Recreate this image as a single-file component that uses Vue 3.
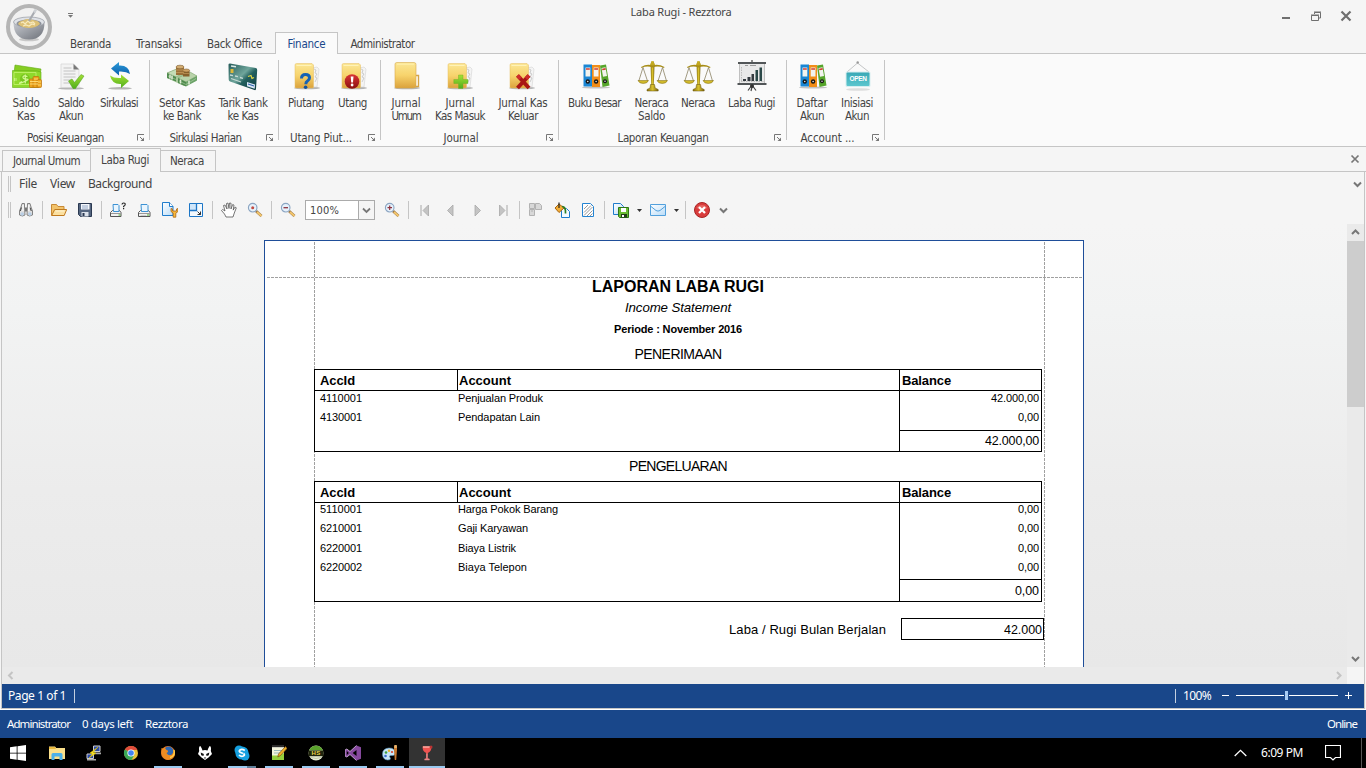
<script setup>
// Sets letter spacing so that a label takes up the given width in pixels.
const vFit = {
  mounted(el, { value }) {
    if (!value) return
    const n = el.textContent.length
    const natural = el.getBoundingClientRect().width
    el.style.letterSpacing = ((value - natural) / n).toFixed(3) + 'px'
  },
}

const ribbonTabs = [
  { t: 'Beranda', w: 67, f: 41 },
  { t: 'Transaksi', w: 70, f: 46 },
  { t: 'Back Office', w: 81, f: 55 },
  { t: 'Finance', w: 63, f: 38, on: true },
  { t: 'Administrator', w: 89, f: 64 },
]

const groups = [
  { name: 'Posisi Keuangan', f: 77, c: 65.5, w: 150, pad: 4, items: [
    { i: 'cash', w: 44, l: [['Saldo', 27], ['Kas', 18]] },
    { i: 'doc', w: 46, l: [['Saldo', 26], ['Akun', 24]] },
    { i: 'cycle', w: 50, l: [['Sirkulasi', 38]] } ] },
  { name: 'Sirkulasi Harian', f: 72, c: 55.5, w: 129, pad: 2, items: [
    { i: 'stack', w: 60, l: [['Setor Kas', 46], ['ke Bank', 38]] },
    { i: 'card', w: 62, l: [['Tarik Bank', 49], ['ke Kas', 31]] } ] },
  { name: 'Utang Piut...', f: 62, c: 42, w: 102, pad: 1, items: [
    { i: 'ask', w: 52, l: [['Piutang', 36]] },
    { i: 'warn', w: 41, l: [['Utang', 29]] } ] },
  { name: 'Journal', f: 35, c: 80, w: 178, pad: 2, items: [
    { i: 'folder', w: 46, l: [['Jurnal', 29], ['Umum', 29]] },
    { i: 'plus', w: 62, l: [['Jurnal', 29], ['Kas Masuk', 50]] },
    { i: 'cross', w: 64, l: [['Jurnal Kas', 49], ['Keluar', 30]] } ] },
  { name: 'Laporan Keuangan', f: 91, c: 104, w: 228, pad: 2, items: [
    { i: 'binders', w: 67, l: [['Buku Besar', 53]] },
    { i: 'scales', w: 47, l: [['Neraca', 34], ['Saldo', 27]] },
    { i: 'scales', w: 46, l: [['Neraca', 34]] },
    { i: 'chart', w: 61, l: [['Laba Rugi', 47]] } ] },
  { name: 'Account ...', f: 54, c: 40.5, w: 98, pad: 2, items: [
    { i: 'binders', w: 46, l: [['Daftar', 31], ['Akun', 24]] },
    { i: 'open', w: 44, l: [['Inisiasi', 32], ['Akun', 24]] } ] },
]

const tools = [
  ['binoc', 26], ['sep', 7], ['openf', 26], ['save', 26], ['sep', 7],
  ['printq', 26], ['print', 26], ['setup', 26], ['scale', 26], ['sep', 7],
  ['hand', 26], ['magdot', 26], ['sep', 7], ['zout', 26], ['combo', 78], ['mag', 26],
  ['sep', 7], ['first', 26], ['prev', 26], ['next', 26], ['last', 26], ['sep', 7],
  ['multi', 26], ['bucket', 26], ['hatch', 26], ['sep', 7], ['export', 26],
  ['arrow', 11], ['mail', 26], ['arrow', 11], ['sep', 7], ['stop', 26], ['more', 16],
]

const tables = [
  { title: 'PENERIMAAN', tf: 87, h: 'short',
    rows: [['4110001', 'Penjualan Produk', '42.000,00', 85, 48], ['4130001', 'Pendapatan Lain', '0,00', 82, 21]],
    total: '42.000,00', totf: 54 },
  { title: 'PENGELUARAN', tf: 98, h: 'tall',
    rows: [['5110001', 'Harga Pokok Barang', '0,00', 100, 21], ['6210001', 'Gaji Karyawan', '0,00', 70, 21],
      ['6220001', 'Biaya Listrik', '0,00', 58, 21], ['6220002', 'Biaya Telepon', '0,00', 69, 21]],
    total: '0,00', totf: 24 },
]

const tasks = [
  { i: 'win' }, { i: 'files' }, { i: 'putty' }, { i: 'chrome' }, { i: 'fox', run: true }, { i: 'foobar' },
  { i: 'skype', run: true, multi: true }, { i: 'note', run: true }, { i: 'hs', run: true }, { i: 'vs', run: true },
  { i: 'paint', run: true }, { i: 'wine', run: true, on: true },
]
</script>

<template>
  <div class="app">
    <svg class="defs" width="0" height="0">
      <defs>
        <linearGradient id="gFolder" x1="0" y1="0" x2="0" y2="1"><stop offset="0" stop-color="#fbe795" /><stop offset=".5" stop-color="#f7d36c" /><stop offset="1" stop-color="#dba23c" /></linearGradient>
        <linearGradient id="gGreen" x1="0" y1="0" x2="0" y2="1"><stop offset="0" stop-color="#a5e035" /><stop offset="1" stop-color="#4fae1c" /></linearGradient>
        <linearGradient id="gBlue" x1="0" y1="0" x2="0" y2="1"><stop offset="0" stop-color="#2a9bd8" /><stop offset="1" stop-color="#0d5fae" /></linearGradient>
        <linearGradient id="gCard" x1="0" y1="0" x2="1" y2="1"><stop offset="0" stop-color="#245a58" /><stop offset=".45" stop-color="#6fa59b" /><stop offset=".6" stop-color="#23605e" /><stop offset="1" stop-color="#0e3b42" /></linearGradient>
        <linearGradient id="gGold" x1="0" y1="0" x2="1" y2="0"><stop offset="0" stop-color="#8a7312" /><stop offset=".5" stop-color="#d8c02c" /><stop offset="1" stop-color="#7a640e" /></linearGradient>
        <linearGradient id="gRed" x1="0" y1="0" x2="0" y2="1"><stop offset="0" stop-color="#da3434" /><stop offset="1" stop-color="#8b1010" /></linearGradient>
        <linearGradient id="gBowl" x1="0" y1="0" x2="1" y2="1"><stop offset="0" stop-color="#c9ccd2" /><stop offset="1" stop-color="#6c7078" /></linearGradient>
        <linearGradient id="gPaper" x1="0" y1="0" x2="1" y2="1"><stop offset="0" stop-color="#ffffff" /><stop offset="1" stop-color="#b9dcf8" /></linearGradient>
        <linearGradient id="gSign" x1="0" y1="0" x2="0" y2="1"><stop offset="0" stop-color="#3aa9b6" /><stop offset="1" stop-color="#5cc6ce" /></linearGradient>
      </defs>

      <symbol id="i-base" viewBox="0 0 32 32">
        <ellipse cx="17" cy="28" rx="13" ry="1.300" fill="#b5b5b5" />
        <path d="M22 8l5-1 2 2-2 18h-5z" fill="#f4f4f4" stroke="#d4d4d4" stroke-width=".6" />
        <path d="M24 9l2 1-1 3 2 1-2 3 2 1-2 4" fill="none" stroke="#bbb" stroke-width=".7" />
        <path d="M5 5q0-1.500 1.500-1.500H22l1.500 1.500V27q0 1-1 1H6q-1 0-1-1z" fill="url(#gFolder)" stroke="#e6bd60" stroke-width=".5" />
        <path d="M6.500 5.500h15" stroke="#fff2b8" />
      </symbol>
      <symbol id="i-cash" viewBox="0 0 32 32">
        <path d="M5 5l26 4-1 6L4 13z" fill="#86cd23" stroke="#62ab12" stroke-width=".6" />
        <path d="M2.500 10.500L27 11l4 1v7l-3 8.500H2.500z" fill="#8fd92c" stroke="#62ab12" stroke-width=".6" />
        <path d="M4 12.500h22v12H4z" fill="none" stroke="#bdf069" stroke-width=".9" />
        <circle cx="15" cy="19" r="5" fill="#77c71f" />
        <path d="M17.500 16.500q-4-1.500-4.500.5t3.500 2-3 3-1.500-.5M15.300 14.500v9" fill="none" stroke="#d6f797" stroke-width="1.200" />
        <path d="M4.500 18v3M6 18v3" stroke="#c8f383" />
        <g fill="#eda31d" stroke="#b8720e" stroke-width=".7"><rect x="19.500" y="19" width="5.500" height="8.500" rx="1" /><rect x="23" y="16.500" width="6" height="11" rx="1" /><rect x="27" y="19.500" width="4.500" height="8" rx="1" /></g>
        <path d="M20 21.500h4M20 24h4M24 19h4M24 21.500h4M24 24h4M28 22h3M28 25h3" stroke="#ffe07a" stroke-width=".9" />
      </symbol>
      <symbol id="i-doc" viewBox="0 0 32 32">
        <ellipse cx="16" cy="28.300" rx="13" ry="1.200" fill="#b5b5b5" />
        <path d="M6 4h13l5 5v18.500H6z" fill="#f3f3f3" stroke="#d2d2d2" stroke-width=".7" />
        <path d="M18.500 4l5.500 5.500h-5.500z" fill="#777" />
        <path d="M8.500 8h8M8.500 11h12M8.500 14h12M8.500 17h12M8.500 20h8M8.500 23h6" stroke="#c3c3c3" />
        <path d="M13.500 21l3.500-2 2.500 3.500L26 14.500l3 1.500-8.500 12.500h-2.500z" fill="url(#gGreen)" stroke="#4a9a18" stroke-width=".5" />
      </symbol>
      <symbol id="i-cycle" viewBox="0 0 32 32">
        <ellipse cx="17" cy="28.300" rx="12" ry="1.200" fill="#b5b5b5" />
        <path d="M8 8.500L16 2v3.500q10-.5 11 8.500-4-3-11-2.500v4z" fill="url(#gBlue)" />
        <path d="M26 21L18 14.500V18q-7 .5-11-2.500 2 9 11 8.500v4z" fill="url(#gGreen)" />
      </symbol>
      <symbol id="i-stack" viewBox="0 0 32 32">
        <path d="M1 13l12-5 18 8-1 5-12 5-17-8z" fill="#a9c89b" />
        <path d="M1 13l12-5 8 3-11 6z" fill="#c4dcb6" stroke="#7fa56f" stroke-width=".6" />
        <path d="M12 18l12-6 7 4-11 6z" fill="#b9d3aa" stroke="#7fa56f" stroke-width=".6" />
        <path d="M1 13l9 4v4.500L1 18zM12 18l8 4v4.500L12 23z" fill="#4f8b4e" />
        <path d="M20 22l11-6v4.500L20 26.500z" fill="#6ba268" />
        <path d="M4 14.500v4M6 15.500v4M14.500 19.500v4M23 20.500v4" stroke="#e9f1df" stroke-width="1.500" />
        <path d="M2 16l8 3.500M13 21l7 3.500 10-6" fill="none" stroke="#c4dcb6" stroke-width=".5" />
        <rect x="10" y="7" width="8" height="8" fill="#9a7038" /><ellipse cx="14" cy="7" rx="4" ry="1.800" fill="#d3ad72" stroke="#7e5c2d" stroke-width=".6" />
        <rect x="17" y="10.500" width="6.500" height="6" fill="#87612c" /><ellipse cx="20.300" cy="10.500" rx="3.300" ry="1.500" fill="#cfa364" stroke="#7e5c2d" stroke-width=".6" />
        <path d="M10 10h8M10 12.500h8M17 13.500h6" stroke="#d0a565" stroke-width=".6" />
      </symbol>
      <symbol id="i-card" viewBox="0 0 32 32">
        <path d="M1.500 4.500Q1.500 3.500 3 3.500L29 8q1.200.4 1.200 2L29 29q-.2 1.500-1.500 1L3 21.500Q1.700 21 1.700 19.500z" fill="url(#gCard)" />
        <path d="M4 6l5 .8" stroke="#dce9e6" stroke-width="1.400" /><rect x="3.500" y="9" width="3" height="4" fill="#dcb93a" />
        <path d="M3 15l3 .6M8 16l3 .7M13 17.500l3 .8M4 18.500l10 3.500" stroke="#c7dad5" stroke-width="1.300" />
        <path d="M21 16.500l3-1 1 3 2-1" stroke="#e3d743" stroke-width="1.200" fill="none" />
        <path d="M20 22l8 2.500-.3 4.200-7.700-2.500z" fill="#dbe8f7" /><path d="M21 24l6 2" stroke="#2e64ad" stroke-width="1.300" />
      </symbol>
      <symbol id="i-ask" viewBox="0 0 32 32"><use href="#i-base" /><path d="M11.500 18.500q0-4 4-4t4 3.300q0 2-2 3.200-1.700 1-1.700 3.200" fill="none" stroke="#1562b4" stroke-width="3" /><circle cx="15.600" cy="27.300" r="1.800" fill="#0f4f9d" /></symbol>
      <symbol id="i-warn" viewBox="0 0 32 32"><use href="#i-base" /><circle cx="15" cy="21.500" r="7.300" fill="url(#gRed)" /><path d="M13.700 16.500h2.800l-.5 6h-1.800z" fill="#fff" /><circle cx="15.100" cy="25" r="1.400" fill="#fff" /></symbol>
      <symbol id="i-folder" viewBox="0 0 32 32">
        <ellipse cx="17" cy="28" rx="13" ry="1.300" fill="#b5b5b5" /><path d="M24 15.500h4.500v11H25" fill="#fff" stroke="#d5a549" stroke-width="1.400" />
        <path d="M5 4q0-1.500 2-1.500h17q2 0 2 2v21q0 2.500-3 2.500H6q-1 0-1-1z" fill="url(#gFolder)" stroke="#d9a94a" stroke-width=".6" /><path d="M7 4.200h17" stroke="#fff0ae" />
      </symbol>
      <symbol id="i-plus" viewBox="0 0 32 32"><use href="#i-base" x="-1" /><path d="M14.500 15h4.500v4.500h5v4H19v5h-4.500v-5h-4.700v-4h4.700z" fill="url(#gGreen)" stroke="#68ad22" stroke-width=".4" /></symbol>
      <symbol id="i-cross" viewBox="0 0 32 32"><use href="#i-base" x="-2" /><path d="M10.500 15.500L22 28M22 15.500L10.500 28" stroke="#a91515" stroke-width="4" /><path d="M10.500 15.500l3 3M22 15.500l-3 3" stroke="#cf2b2b" stroke-width="3.500" /></symbol>
      <symbol id="i-binders" viewBox="0 0 32 32">
        <ellipse cx="17" cy="27.500" rx="14" ry="1" fill="#c2c2c2" />
        <path d="M4.500 4.500h8.500v22H4.500z" fill="#1b86d3" /><path d="M13 5h8v22h-8z" fill="#f18d18" /><path d="M21 5.500l6-1 3.500 21-7 1.500z" fill="#56a52b" />
        <path d="M6.500 7.500h4.800v9H6.500zM14.700 7.500h4.800v9h-4.800zM22.500 8l4-.7 1.500 8.700-4 .8z" fill="#f2f3ee" />
        <path d="M7 9h3.800M15.200 9h3.800M23.200 9.500l3.500-.6" stroke="#d23c32" stroke-width="1.600" />
        <circle cx="8.800" cy="21.500" r="2.200" fill="#171717" /><circle cx="17.100" cy="21.500" r="2.200" fill="#171717" /><circle cx="26" cy="21.300" r="2" fill="#171717" />
        <g fill="#fff"><circle cx="8.800" cy="21.500" r=".7" /><circle cx="17.100" cy="21.500" r=".7" /><circle cx="26" cy="21.300" r=".7" /></g>
      </symbol>
      <symbol id="i-scales" viewBox="0 0 32 32">
        <path d="M15.500 1h2l1 4-.7 20h-2.600L14.600 5z" fill="url(#gGold)" /><circle cx="16.500" cy="4.500" r="2.200" fill="#c2a81e" />
        <path d="M5 7q6-3.500 11.500-1.500Q22 3.500 28.500 7l-.5 1q-6-2.500-11.500-.5Q11 5.500 5.500 8z" fill="#a88e17" />
        <path d="M7 7.500L2.800 21M7 7.500L11.500 21M26.500 7.500L22 21M26.500 7.500L30.500 21" stroke="#8b8364" stroke-width=".8" />
        <path d="M2 20.500h10.500q-1 3-5.200 3T2 20.500zM21 20.500h10.500q-1 3-5.200 3T21 20.500z" fill="#d0b92a" stroke="#7e690f" stroke-width=".5" />
        <path d="M14.500 24.500h4l.7 3.500 3 1.500v1.500H11v-1.500l3-1.500z" fill="url(#gGold)" stroke="#665208" stroke-width=".5" />
      </symbol>
      <symbol id="i-chart" viewBox="0 0 32 32">
        <path d="M16 0v3M16 24v4M16 25l-4 5.500M16 25l4 5.500M16 27l-1 4" stroke="#444" stroke-width="1.200" fill="none" />
        <path d="M3.500 3.500h25v20h-25z" fill="#e9e9e9" stroke="#aaa" stroke-width=".7" /><path d="M2 3h28M1.500 24h29" stroke="#525658" stroke-width="1.800" />
        <path d="M7 19h3v2H7zM11.500 17h3v4h-3zM15.500 14h2.500v7h-2.500z" fill="#353b40" /><path d="M19.500 10h2.500v11h-2.500zM23.500 7.500h2.500V21h-2.500z" fill="#2b4848" />
        <path d="M5 21.500h23M5.500 7v14" stroke="#aaa" stroke-width=".7" stroke-dasharray="1.500 1" /><path d="M9 5.500h3M14 5.500h6" stroke="#888" stroke-width=".8" />
        <circle cx="16" cy="26" r="2" fill="#333" />
      </symbol>
      <symbol id="i-open" viewBox="0 0 32 32">
        <path d="M6 12L16.500 3 28 12" fill="none" stroke="#c4c6c7" stroke-width="1" /><circle cx="16.700" cy="2.500" r="1.200" fill="#999" />
        <ellipse cx="17" cy="29.500" rx="12" ry="1.300" fill="#dedede" />
        <rect x="4.500" y="11.500" width="25" height="15.500" rx="1.500" fill="#d8eef0" /><rect x="5.500" y="12.500" width="23" height="13.500" rx="1" fill="url(#gSign)" />
      </symbol>

      <symbol id="t-binoc" viewBox="0 0 16 16"><path d="M4 1.500h2.500V5L7 13q-2.500 2-5.500 0V9L3 5zM9.500 1.500H12L13 5l1.500 4v4q-3 2-5.500 0z" fill="#dedede" stroke="#777" stroke-width=".9" /><path d="M7 5.500h2v4H7z" fill="#777" /><path d="M3.500 5.500L2.300 9M12 5.500L13.300 9" stroke="#444" /><path d="M5 3v6M10.800 3v6" stroke="#fff" stroke-width="1.100" /><ellipse cx="4.200" cy="12" rx="1.800" ry="1.700" fill="#b9cfe6" /><ellipse cx="11.800" cy="12" rx="1.800" ry="1.700" fill="#b9cfe6" /></symbol>
      <symbol id="t-openf" viewBox="0 0 16 16"><path d="M.500 13.500v-11h5l1.500 2h6v3" fill="#f2c36b" stroke="#c88a35" /><path d="M.700 13.500l3-6h12l-2.500 6z" fill="#fbe0a0" stroke="#c07a1f" /><path d="M4.500 9h9" stroke="#fff4d3" /></symbol>
      <symbol id="t-save" viewBox="0 0 16 16"><path d="M1.500 1.500h13v13h-11l-2-2z" fill="#54657f" stroke="#2b3951" /><path d="M4 2h8.500v5.500H4z" fill="#f4f7fc" /><path d="M5 4h6M5 6h6" stroke="#94a8c6" /><path d="M4.500 10h7v4.500h-7z" fill="#dce2eb" /><path d="M5.500 11h2v3h-2z" fill="#2b3951" /></symbol>
      <symbol id="t-print" viewBox="0 0 16 16"><path d="M2.500 14.500v-4l2-2h8l1.500 2v4z" fill="#f2f2f2" stroke="#555" /><path d="M5.500 9.500l-.5-7h6l1 1v6z" fill="#e9f5fe" stroke="#3c92d4" /><path d="M3 11.500h10.500" stroke="#999" /><path d="M4.500 13.500h6" stroke="#ccc" /><path d="M11 12.500h2v1h-2z" fill="#4fb52e" /></symbol>
      <symbol id="t-printq" viewBox="0 0 16 16"><path d="M.500 14.500v-4l2-2h7l1.500 2v4z" fill="#f2f2f2" stroke="#555" /><path d="M3.500 9.500l-.5-7h5l1 1v6z" fill="#e9f5fe" stroke="#3c92d4" /><path d="M1 11.500h9.500" stroke="#999" /><path d="M8.500 12.500h2v1h-2z" fill="#4fb52e" /><path d="M12 2.500q0-1.500 1.700-1.500t1.500 1.500-1.600 1.700v1" fill="none" stroke="#222" stroke-width="1.100" /><path d="M13 6h1.200v1.300H13z" fill="#222" /></symbol>
      <symbol id="t-setup" viewBox="0 0 16 16"><path d="M.500.500h7l3.500 4v9H.500z" fill="url(#gPaper)" stroke="#1f7ccc" /><path d="M7.500.500v4H11" fill="#fff" stroke="#1f7ccc" /><path d="M9 6.500v3l2.200 1.700v4h2.600v-4L16 9.500v-3l-1.500.5v2h-4V7z" fill="#f8ba3b" stroke="#a96516" stroke-width=".8" /></symbol>
      <symbol id="t-scale" viewBox="0 0 16 16"><path d="M1.500 1.500h13v13h-13z" fill="#f3f9fe" stroke="#1d76c6" /><path d="M2 2h6v6H2z" fill="#cfe6fa" /><path d="M1.500 8.500h7v-7" fill="none" stroke="#1d76c6" stroke-width="1.300" /><path d="M9.500 9.500l3 3M12.500 9.500v3h-3" fill="none" stroke="#333" /></symbol>
      <symbol id="t-hand" viewBox="0 0 16 16"><path d="M5 15l-1.500-3-3-3.500 1.200-1 2.300 1.500L2.500 3.500 4 3l2 4-.5-5.500L7 1l1 5.500.5-5.500 1.500.2V7l1.700-4.500 1.300.6-.8 5 1.800-3 1.300.7-2 5.200L12 15z" fill="#fff" stroke="#555" stroke-width=".8" stroke-linejoin="round" /></symbol>
      <symbol id="t-mag" viewBox="0 0 16 16"><path d="M9 9l5.500 5" stroke="#9c7847" stroke-width="2.800" /><path d="M10 10l4.500 4" stroke="#f5c76c" stroke-width="1.700" /><circle cx="5.700" cy="5.700" r="4.300" fill="#e6f1fb" stroke="#8ba5c2" stroke-width="1.100" /><path d="M3.500 5.700H8M5.700 3.500V8" stroke="#8e3440" stroke-width="1.200" /></symbol>
      <symbol id="t-magdot" viewBox="0 0 16 16"><path d="M9 9l5.500 5" stroke="#9c7847" stroke-width="2.800" /><path d="M10 10l4.500 4" stroke="#f5c76c" stroke-width="1.700" /><circle cx="5.700" cy="5.700" r="4.300" fill="#e6f1fb" stroke="#8ba5c2" stroke-width="1.100" /><circle cx="5.700" cy="5.700" r="1.500" fill="#c24a40" /></symbol>
      <symbol id="t-zout" viewBox="0 0 16 16"><path d="M9 9l5.500 5" stroke="#9c7847" stroke-width="2.800" /><path d="M10 10l4.500 4" stroke="#f5c76c" stroke-width="1.700" /><circle cx="5.700" cy="5.700" r="4.300" fill="#e6f1fb" stroke="#8ba5c2" stroke-width="1.100" /><path d="M3.500 5.700H8" stroke="#8e3440" stroke-width="1.300" /></symbol>
      <symbol id="t-first" viewBox="0 0 16 16"><path d="M4 3v11" stroke="#a8a8a8" /><path d="M11.500 3v11L6 8.500z" fill="#c4c4c4" stroke="#a8a8a8" stroke-width=".8" /></symbol>
      <symbol id="t-prev" viewBox="0 0 16 16"><path d="M10 3v11L4.500 8.500z" fill="#c4c4c4" stroke="#a8a8a8" stroke-width=".8" /></symbol>
      <symbol id="t-next" viewBox="0 0 16 16"><path d="M6 3v11l5.500-5.500z" fill="#c4c4c4" stroke="#a8a8a8" stroke-width=".8" /></symbol>
      <symbol id="t-last" viewBox="0 0 16 16"><path d="M12 3v11" stroke="#a8a8a8" /><path d="M4.500 3v11L10 8.500z" fill="#c4c4c4" stroke="#a8a8a8" stroke-width=".8" /></symbol>
      <symbol id="t-multi" viewBox="0 0 16 16"><path d="M1.500 1.500h5v5h-5zM7.500 1.500h4l2 2v4h-6zM1.500 7.500h5v6h-5z" fill="#d8d8d8" stroke="#b2b2b2" /><path d="M7.500 3.500h-1M3 9h2" stroke="#b2b2b2" /></symbol>
      <symbol id="t-bucket" viewBox="0 0 16 16"><path d="M7.500 6.500h5l3 3v6h-8z" fill="#f6fbff" stroke="#1f7ccc" /><path d="M1 6l4-4 5 4-5 4.500z" fill="#f3ae36" stroke="#a76410" /><path d="M5 .500v5.500" stroke="#222" stroke-width="1.200" /><path d="M8 4.500q4 0 3.500 7" fill="none" stroke="#2b7c22" stroke-width="1.700" /></symbol>
      <symbol id="t-hatch" viewBox="0 0 16 16"><path d="M2.500 1.500h8l3 3v10h-11z" fill="#fff" stroke="#2484d2" /><path d="M4 7l4-4M4 10.500l7-7M4 13.500l8.500-8.500M7 14l5.500-5.500M10 14l2.500-2.500" stroke="#999" stroke-width="1" /></symbol>
      <symbol id="t-export" viewBox="0 0 16 16"><path d="M.500 1.500h7l3 3v8H.500z" fill="url(#gPaper)" stroke="#1f7ccc" /><path d="M5.500 5.500h10v10h-9l-1-1z" fill="#69bd32" stroke="#2d7616" /><path d="M8 6h5v4H8z" fill="#fff" /><path d="M8 12h6v3.500H8z" fill="#233c1a" /><path d="M9 13h2v2H9z" fill="#fff" /></symbol>
      <symbol id="t-mail" viewBox="0 0 16 16"><path d="M.500 2.500h15v11H.500z" fill="url(#gPaper)" stroke="#52a0dc" /><path d="M1 4.500l5 4q2 1.200 4 0l5-4" fill="none" stroke="#52a0dc" /></symbol>
      <symbol id="t-stop" viewBox="0 0 16 16"><circle cx="8" cy="8" r="7.500" fill="#d93d3d" stroke="#a82525" /><path d="M2.500 6a6 5 0 0111 0q-5 3-11 0" fill="#ee8079" opacity=".6" /><path d="M5 5l6 6M11 5l-6 6" stroke="#fff" stroke-width="2.300" /></symbol>

      <symbol id="k-win" viewBox="0 0 16 16"><path d="M0 2.300l6.700-1v6.400H0zM7.500 1.200L16 0v7.700H7.500zM0 8.500h6.700v6.200l-6.700-1zM7.500 8.500H16V16l-8.500-1.200z" fill="#fff" /></symbol>
      <symbol id="k-files" viewBox="0 0 16 16"><path d="M0 1.500h6l1.200 1.500H16V14H0z" fill="#fbe08b" /><path d="M0 2h6l1 2H0z" fill="#e9b93f" /><path d="M2.500 15V9.500Q2.500 8 4 8h8q1.500 0 1.500 1.500V15h-3v-3.500h-5V15z" fill="#4cb0e8" /></symbol>
      <symbol id="k-putty" viewBox="0 0 16 16"><path d="M7.500 1h6.500v5.500H7.500zM1 9h6.500v4.500H1z" fill="#2848a8" stroke="#ccc" /><path d="M6 7.500h9v1.700H6zM1 14h9v1.500H1z" fill="#aaa" /><path d="M12 2L7 7.500l3 .5L3 13l3.500-4L4 8z" fill="#ffe92b" stroke="#d5b900" stroke-width=".6" /></symbol>
      <symbol id="k-chrome" viewBox="0 0 16 16"><circle cx="8" cy="8" r="7" fill="#e8c23a" /><path d="M8 8L1.900 4.500A7 7 0 0114.400 5H8z" fill="#df4b3b" /><path d="M8 8L1.900 4.500A7 7 0 008.500 15l3-5.500z" fill="#3aa757" /><circle cx="8" cy="8" r="3.600" fill="#fff" /><circle cx="8" cy="8" r="2.800" fill="#4285f4" /></symbol>
      <symbol id="k-fox" viewBox="0 0 16 16"><circle cx="8" cy="8" r="7" fill="#e8761e" /><circle cx="8.600" cy="6.200" r="4.700" fill="#2e68b3" /><path d="M1.500 3q2 1 3-.5L6.500 5q2 0 1.500 2L6.500 8q2 3.500 5.500 1.500 2-2 1-5.500 3 3 1.500 7-3 5-8.500 3.500Q0 11.500 1.500 3z" fill="#ee8c22" /><path d="M14 5q1.500 6-4 7.500" fill="none" stroke="#ffd24a" stroke-width="1.300" /></symbol>
      <symbol id="k-foobar" viewBox="0 0 16 16"><path d="M3 1q1 0 2.500 4.500Q8 4.500 10.500 5.500 12 1 13 1q1.500 1 .8 5L15 9l-3.500 3.500L8 15l-3.500-2.500L1 9l1.200-3Q1.500 2 3 1z" fill="#fff" /><path d="M3.700 7.500l3.200 1.500-.5 2-2.200-.7zM12.300 7.500L9.100 9l.5 2 2.200-.7zM6.800 12.500h2.400L8 14z" fill="#111" /></symbol>
      <symbol id="k-skype" viewBox="0 0 16 16"><circle cx="5" cy="5" r="4.500" fill="#159fdf" /><circle cx="11" cy="11" r="4.500" fill="#159fdf" /><circle cx="8" cy="8" r="6.600" fill="#159fdf" /><path d="M10.800 5.500Q8 3.500 6 5t1.200 2.700 2.300.8q2 1.500-.2 2.500T5 10" fill="none" stroke="#fff" stroke-width="1.700" /></symbol>
      <symbol id="k-note" viewBox="0 0 16 16"><path d="M1 2h12v13H1z" fill="#f3f5dc" /><path d="M1.500 1h12M1.500 2.500h12" stroke="#aaa" stroke-dasharray="1 1" /><path d="M3 5.500h8M3 8h6" stroke="#9bb" /><path d="M1 10.500h7.500L13 8v7H1z" fill="#94cf3c" /><path d="M14.500 1.500L7.500 9l-.7 3 2.700-1.500L16 3.500z" fill="#f0b429" stroke="#7c4b12" stroke-width=".7" /></symbol>
      <symbol id="k-hs" viewBox="0 0 16 16"><circle cx="8" cy="8" r="7.500" fill="#e6ead4" /><path d="M1 5.500a7.500 7.500 0 0114 0z" fill="#5aa22c" /><path d="M3 12.500q5 2 10 0" stroke="#c4cca8" fill="none" /><path d="M.500 5.500h15v5.700H.500z" fill="#20250d" /></symbol>
      <symbol id="k-vs" viewBox="0 0 16 16"><path d="M11.500.500L16 2.300v11.400l-4.500 1.800L5 9.500 1.800 12 0 11V5l1.800-1L5 6.500z" fill="#86499e" /><path d="M11.500 5v6L7.700 8zM1.800 6v4l2-2z" fill="#000" /><path d="M11.500.500L5 6.500 1.800 4 0 5v6l1.800 1L5 9.500l6.500 6" fill="none" stroke="#d9bbe7" stroke-width=".8" /></symbol>
      <symbol id="k-paint" viewBox="0 0 16 16"><path d="M7 3q5.500 0 6 4t-3 3.500-2 2-2.500 2.500Q.500 14.500.500 9T7 3z" fill="#c8e6f8" stroke="#5793bd" stroke-width=".6" /><circle cx="4" cy="7.500" r="1.300" fill="#3f9f3f" /><circle cx="7" cy="5.800" r="1.200" fill="#e8b526" /><circle cx="3.500" cy="11" r="1.300" fill="#3a6ed0" /><circle cx="10" cy="7" r="1.100" fill="#d94732" /><path d="M12 1h3v4l-.8 10h-1.400L12 5z" fill="#c7772d" /><path d="M12.300 0h2.500v3h-2.500z" fill="#e5b26c" /></symbol>
      <symbol id="k-wine" viewBox="0 0 16 16"><path d="M3.500 1.500h9q0 5-3.700 6.500l-.3 5 2.500 1.500H5l2.500-1.500-.3-5Q3.500 6.500 3.500 1.500z" fill="#ef5350" /><path d="M4 2h8" stroke="#ffb1a8" stroke-width="1.400" /><path d="M7.900 8.500v5M5.500 14.500h5" stroke="#e58a8a" stroke-width="1.300" /><circle cx="12" cy="2" r="1.500" fill="#b33" /></symbol>
    </svg>

    <header class="head">
      <svg class="logo" width="48" height="48" viewBox="0 0 48 48">
        <circle cx="24" cy="24" r="21" fill="#f1f1f1" stroke="#b5b5b5" stroke-width="4" />
        <ellipse cx="24" cy="36.500" rx="10" ry="1.800" fill="#c8c8c8" />
        <path d="M8.500 19q0 17.500 15.500 17.500T39.500 19z" fill="url(#gBowl)" />
        <ellipse cx="24" cy="19" rx="15.500" ry="5" fill="#dfe2e7" stroke="#9fa3ab" stroke-width=".8" />
        <ellipse cx="24" cy="20.500" rx="12.500" ry="4" fill="#8d919a" />
        <path d="M13 21q1-3 5-3.500 5-2.500 10-.5 6 .5 7 4-4 4-11 4t-11-4z" fill="#dcc076" />
        <path d="M16 20l2-1 2 2 3-3 2 2 3-1 2 2M18 23l3-1 3 1 3-2 3 1" fill="none" stroke="#f7e9bd" stroke-width="1.200" />
        <path d="M24 18l6-10" stroke="#a7aab0" stroke-width="2.200" /><path d="M29 9.500l2-3" stroke="#cdd0d4" stroke-width="2.600" />
      </svg>
      <svg class="qat" width="7" height="5" viewBox="0 0 7 5"><path d="M1 .500h5" stroke="#777" /><path d="M1 2h5L3.500 4.800z" fill="#777" /></svg>
      <div class="caption"><span v-fit="101">Laba Rugi - Rezztora</span></div>
      <svg class="winbtns" width="72" height="14" viewBox="0 0 72 14">
        <path d="M2 9h8" stroke="#6f6f6f" stroke-width="2" />
        <path d="M34.500 5V3.500h6V9H38M31.500 6.500h7v5h-7z" fill="none" stroke="#6f6f6f" /><path d="M34 3h7M31 6h8" stroke="#6f6f6f" />
        <path d="M61.500 2.500l9 9M70.500 2.500l-9 9" stroke="#6f6f6f" stroke-width="2.200" />
      </svg>
      <nav class="rtabs">
        <div v-for="t in ribbonTabs" :key="t.t" class="rtab" :class="{ on: t.on }" :style="{ width: t.w + 'px' }"><span v-fit="t.f">{{ t.t }}</span></div>
      </nav>
    </header>

    <section class="ribbon">
      <div v-for="g in groups" :key="g.name" class="group" :style="{ width: g.w + 'px' }">
        <div class="items" :style="{ paddingLeft: g.pad + 'px' }">
          <div v-for="(it, k) in g.items" :key="k" class="item" :style="{ width: it.w + 'px' }">
            <svg width="32" height="32"><use :href="'#i-' + it.i" width="32" height="32" /></svg>
            <span v-if="it.i === 'open'" v-fit="17" class="sign">OPEN</span>
            <div v-for="l in it.l" :key="l[0]" class="lbl"><span v-fit="l[1]">{{ l[0] }}</span></div>
          </div>
        </div>
        <div class="gname" :style="{ width: g.c * 2 + 'px' }"><span v-fit="g.f">{{ g.name }}</span></div>
        <svg class="launch" width="8" height="8" viewBox="0 0 8 8"><path d="M.500 6.500V.500H7M3 3l3 3" fill="none" stroke="#777" /><path d="M7 3.500v3.500H3.500z" fill="#777" /></svg>
      </div>
    </section>

    <nav class="dtabs">
      <div class="dtab first"><span v-fit="67">Journal Umum</span></div>
      <div class="dtab on"><span v-fit="48">Laba Rugi</span></div>
      <div class="dtab last"><span v-fit="34">Neraca</span></div>
      <svg class="dclose" width="10" height="10" viewBox="0 0 10 10"><path d="M1.500 1.500l7 7M8.500 1.500l-7 7" stroke="#777" stroke-width="1.700" /></svg>
    </nav>

    <main class="panel">
      <div class="bar menu">
        <i class="grip"></i>
        <span class="m1" v-fit="18">File</span><span class="m2" v-fit="25">View</span><span class="m3" v-fit="64">Background</span>
        <svg class="mchev" width="9" height="7" viewBox="0 0 9 7"><path d="M1 1.500l3.500 3.500L8 1.500" fill="none" stroke="#777" stroke-width="2" /></svg>
      </div>
      <div class="bar toolbar">
        <i class="grip"></i>
        <div v-for="(t, k) in tools" :key="k" class="tool" :style="{ width: t[1] + 'px' }">
          <i v-if="t[0] === 'sep'" class="sep"></i>
          <div v-else-if="t[0] === 'combo'" class="combo"><span v-fit="29">100%</span><b><svg width="9" height="7" viewBox="0 0 9 7"><path d="M1 1.500l3.500 3.500L8 1.500" fill="none" stroke="#777" stroke-width="1.800" /></svg></b></div>
          <svg v-else-if="t[0] === 'arrow'" width="5" height="3" viewBox="0 0 5 3"><path d="M0 0h5L2.500 3z" fill="#333" /></svg>
          <svg v-else-if="t[0] === 'more'" width="9" height="7" viewBox="0 0 9 7"><path d="M1 1.500l3.500 3.500L8 1.500" fill="none" stroke="#777" stroke-width="2" /></svg>
          <svg v-else width="16" height="16"><use :href="'#t-' + t[0]" width="16" height="16" /></svg>
        </div>
      </div>

      <div class="view">
        <div class="canvas">
          <article class="page">
            <i class="guide gh"></i><i class="guide gl"></i><i class="guide gr"></i>
            <h1><span v-fit="172">LAPORAN LABA RUGI</span></h1>
            <h2><span v-fit="106">Income Statement</span></h2>
            <h3><span v-fit="128">Periode : November 2016</span></h3>
            <template v-for="t in tables" :key="t.title">
              <h4><span v-fit="t.tf">{{ t.title }}</span></h4>
              <div class="table" :class="t.h">
                <div class="thead"><div class="c1"><span v-fit="35">AccId</span></div><div class="c2"><span v-fit="52">Account</span></div><div class="c3"><span v-fit="49">Balance</span></div></div>
                <div class="tbody">
                  <div class="left">
                    <div v-for="r in t.rows" :key="r[0]" class="row"><div class="code"><span v-fit="42">{{ r[0] }}</span></div><span v-fit="r[3]">{{ r[1] }}</span></div>
                  </div>
                  <div class="right">
                    <div v-for="r in t.rows" :key="r[0]" class="row num"><span v-fit="r[4]">{{ r[2] }}</span></div>
                    <div class="total"><span v-fit="t.totf">{{ t.total }}</span></div>
                  </div>
                </div>
              </div>
            </template>
            <div class="net"><span v-fit="157">Laba / Rugi Bulan Berjalan</span><div class="box"><span v-fit="38">42.000</span></div></div>
          </article>
        </div>
        <div class="vscroll">
          <svg width="17" height="17" viewBox="0 0 17 17"><path d="M5 10l3.500-3.500L12 10" fill="none" stroke="#777" stroke-width="2" /></svg>
          <div class="thumb"></div>
          <svg class="dn" width="17" height="17" viewBox="0 0 17 17"><path d="M5 7l3.500 3.500L12 7" fill="none" stroke="#777" stroke-width="2" /></svg>
        </div>
      </div>
      <div class="hscroll">
        <svg width="17" height="17" viewBox="0 0 17 17"><path d="M10.500 5L7 8.500l3.500 3.500" fill="none" stroke="#c4c4c4" stroke-width="2" /></svg>
        <svg class="rt" width="17" height="17" viewBox="0 0 17 17"><path d="M7 5l3.500 3.500L7 12" fill="none" stroke="#c4c4c4" stroke-width="2" /></svg>
      </div>
      <div class="pstatus">
        <span v-fit="58">Page 1 of 1</span><i class="vline"></i>
        <i class="vline zl"></i><span v-fit="28">100%</span>
        <svg class="zoom" width="132" height="12" viewBox="0 0 132 12"><path d="M0 5.500h7M14 5.500h48M67 5.500h49M123 5.500h7M126.500 2v7" stroke="#fff" /><path d="M63 1h3v9h-3z" fill="#a9cdf3" /></svg>
      </div>
    </main>

    <footer class="status"><span v-fit="63">Administrator</span><span v-fit="51">0 days left</span><span v-fit="43">Rezztora</span><span class="on" v-fit="30">Online</span></footer>

    <footer class="taskbar">
      <div v-for="t in tasks" :key="t.i" class="task" :class="{ run: t.run, on: t.on, multi: t.multi, start: t.i === 'win' }">
        <svg width="16" height="16"><use :href="'#k-' + t.i" width="16" height="16" /></svg>
        <span v-if="t.i === 'hs'" v-fit="9" class="hs">HS</span>
      </div>
      <div class="tray">
        <svg width="13" height="8" viewBox="0 0 13 8"><path d="M.700 7l5.800-5.700L12.300 7" fill="none" stroke="#fff" stroke-width="1.300" /></svg>
        <span class="clock" v-fit="42">6:09 PM</span>
        <svg class="note" width="16" height="17" viewBox="0 0 16 17"><path d="M.500.500h15v12h-5L8 15l-2.500-2.500h-5z" fill="none" stroke="#fff" stroke-width="1.200" /></svg>
        <i></i>
      </div>
    </footer>
  </div>
</template>

<style>
body { margin: 0; overflow: hidden; }
</style>

<style scoped>
.app { position: relative; width: 1366px; height: 768px; overflow: hidden; display: flex; flex-direction: column; background: #f5f5f5; color: #444; font: 11.500px "DejaVu Sans Condensed", "Noto Sans", sans-serif; box-sizing: border-box; }
.app * { box-sizing: border-box; }
.defs { position: absolute; }
span { display: inline-block; white-space: pre; flex: none; }
svg { display: block; flex: none; }

.head { position: relative; height: 54px; flex: none; border-bottom: 1px solid #c5c5c5; }
.logo { position: absolute; left: 5px; top: 3px; }
.qat { position: absolute; left: 67px; top: 13px; }
.caption { height: 32px; line-height: 24px; text-align: center; padding-right: 4px; font-family: "Noto Sans", sans-serif; font-size: 11px; }
.winbtns { position: absolute; left: 1280px; top: 9px; }
.rtabs { display: flex; height: 22px; padding-left: 57px; }
.rtab { text-align: center; line-height: 25px; height: 22px; }
.rtab.on { color: #19478a; background: #fafafa; border: 1px solid #c5c5c5; border-bottom: 0; line-height: 23px; }

.ribbon { display: flex; height: 93px; flex: none; background: #fafafa; border-bottom: 1px solid #c5c5c5; }
.group { position: relative; padding-top: 6px; }
.group::after { content: ""; position: absolute; right: 0; top: 6px; width: 1px; height: 80px; background: #c5c5c5; }
.items { display: flex; height: 71px; }
.item { position: relative; display: flex; flex-direction: column; align-items: center; flex: none; }
.item svg { margin-bottom: 5px; }
.sign { position: absolute; top: 14px; left: 14.500px; font: 700 6.500px/10px "Liberation Sans", sans-serif; color: #fff; }
.lbl { line-height: 13px; height: 13px; }
.gname { text-align: center; line-height: 14px; }
.launch { position: absolute; right: 5px; top: 80px; }

.dtabs { position: relative; display: flex; align-items: flex-end; height: 25px; flex: none; padding-left: 2px; border-bottom: 1px solid #c5c5c5; }
.dtab { text-align: center; height: 21px; line-height: 21px; border: 1px solid #c5c5c5; border-bottom: 0; }
.first { width: 88px; border-right: 0; }
.last { width: 55px; border-left: 0; padding-right: 2px; }
.dtab.on { width: 71px; height: 24px; line-height: 23px; margin-bottom: -1px; background: #f5f5f5; padding-right: 1px; }
.dclose { position: absolute; left: 1350px; top: 7px; }

.panel { display: flex; flex-direction: column; width: 1364px; height: 537px; margin-left: 1px; flex: none; border: solid #c5c5c5; border-width: 0 1px 1px; }
.bar { display: flex; align-items: center; flex: none; position: relative; padding-left: 6px; }
.grip { width: 3px; height: 16px; border: solid #c5c5c5; border-width: 0 1px; flex: none; }
.menu { height: 24px; font: 12px "Noto Sans", sans-serif; }
.menu span { line-height: 16px; margin-top: -1px; }
.m1 { margin-left: 8px; }
.m2 { margin-left: 13px; }
.m3 { margin-left: 13px; }
.mchev { position: absolute; right: 2px; top: 9px; }
.toolbar { height: 28px; }
.toolbar .grip { margin-right: 2px; }
.tool { display: flex; justify-content: center; align-items: center; height: 28px; flex: none; }
.sep { width: 1px; height: 18px; background: #c5c5c5; }
.combo { display: flex; width: 70px; height: 20px; border: 1px solid #ababab; background: #fff; line-height: 19px; padding-left: 4px; font-size: 11px; }
.combo b { width: 16px; margin-left: auto; border-left: 1px solid #ababab; background: #f5f5f5; display: flex; align-items: center; justify-content: center; }

.view { display: flex; height: 443px; flex: none; }
.canvas { width: 1345px; overflow: hidden; padding: 16px 0 0 262px; background: linear-gradient(180deg, #f5f5f5 0, #f2f3f3 20%, #ececec 60%, #e8e8e8 100%); }
.page { position: relative; width: 820px; height: 470px; background: #fff; border: 1px solid #1f4e99; padding: 36px 0 0 49px; color: #000; font-family: "Liberation Sans", Arial, sans-serif; }
.guide { position: absolute; }
.gh { left: 2px; right: 1px; top: 36px; height: 1px; background: repeating-linear-gradient(90deg, #a0a0a0 0 3px, transparent 3px 4px); }
.gl, .gr { top: 1px; bottom: 0; width: 1px; background: repeating-linear-gradient(180deg, #a0a0a0 0 3px, transparent 3px 4px); }
.gl { left: 49px; }
.gr { left: 779px; }
h1, h2, h3, h4 { margin: 0; width: 728px; text-align: center; font-weight: 400; position: relative; }
h1 { font-size: 16px; font-weight: 700; line-height: 20px; height: 20px; }
h2 { font-size: 13.300px; font-style: italic; line-height: 21px; height: 21px; }
h3 { font-size: 11px; font-weight: 700; line-height: 22px; height: 22px; }
h4 { font-size: 14px; line-height: 29px; height: 29px; }
.table { position: relative; display: flex; flex-direction: column; width: 728px; border: 1px solid #000; font-size: 11px; }
.short { height: 83px; }
.tall { height: 121px; }
.thead { display: flex; height: 21px; border-bottom: 1px solid #000; font-weight: 700; font-size: 13px; line-height: 22px; }
.c1 { width: 143px; border-right: 1px solid #000; padding-left: 5px; }
.c2 { width: 442px; border-right: 1px solid #000; padding-left: 1px; }
.c3 { padding-left: 2px; }
.tbody { display: flex; flex: 1; }
.left { width: 585px; border-right: 1px solid #000; padding-left: 5px; }
.right { flex: 1; display: flex; flex-direction: column; }
.row { display: flex; height: 14px; line-height: 14px; margin-bottom: 5px; }
.tall .row:first-child { margin-top: -1px; }
.tall .row:nth-child(2) { margin-bottom: 6px; }
.code { width: 138px; }
.num { justify-content: flex-end; padding-right: 2px; }
.total { display: flex; justify-content: flex-end; margin-top: auto; height: 21px; line-height: 20px; border-top: 1px solid #000; font-size: 12.500px; padding-right: 2px; }
.tall .total { height: 22px; line-height: 22px; }
.net { position: relative; display: flex; margin-top: 16px; padding-left: 415px; line-height: 24px; height: 22px; font-size: 13px; }
.box { width: 143px; height: 22px; margin-left: 15px; border: 1px solid #000; line-height: 22px; text-align: right; font-size: 12.500px; background: #fff; padding-right: 1px; }

.vscroll { width: 17px; display: flex; flex-direction: column; background: #eaeaea; }
.thumb { height: 166px; background: #cdcdcd; }
.dn { margin-top: auto; }
.hscroll { display: flex; height: 17px; width: 1345px; background: #eaeaea; flex: none; }
.rt { margin-left: auto; }

.pstatus { display: flex; align-items: center; height: 24px; flex: none; background: #19478a; color: #fff; font: 12px "Noto Sans", sans-serif; padding-left: 6px; }
.pstatus span { line-height: 16px; margin-top: -1px; }
.vline { width: 1px; height: 14px; background: #c3cfe0; margin-left: 8px; }
.zl { margin-left: 1100px; margin-right: 7px; }
.zoom { margin-left: 11px; }

.status { display: flex; height: 28px; line-height: 27px; margin-top: 1px; flex: none; background: #19478a; box-shadow: 0 -1px #fff; color: #fff; font-family: "Noto Sans", sans-serif; padding: 0 9px 0 7px; gap: 12px; }
.status .on { margin-left: auto; }

.taskbar { display: flex; height: 30px; flex: none; background: #000; padding-left: 2px; gap: 1px; }
.task { position: relative; width: 36px; height: 30px; display: flex; align-items: center; justify-content: center; }
.start svg { margin-right: 4px; }
.task.on { background: #333; }
.task.run::after { content: ""; position: absolute; left: 4px; right: 4px; bottom: 0; height: 2px; background: #99c9f0; }
.task.on::after { left: 0; right: 0; }
.task.multi::after { background: linear-gradient(90deg, #99c9f0 19px, #5f7f9a 19px); }
.hs { position: absolute; left: 13.500px; top: 10px; font: 700 6px/10px "Liberation Sans", sans-serif; color: #e8d94c; }
.tray { display: flex; align-items: center; margin-left: auto; color: #fff; font: 12px "Noto Sans", sans-serif; padding-right: 4px; }
.clock { margin: -1px 0 0 14px; line-height: 16px; }
.note { margin: 1px 20px 0 22px; }
.tray i { width: 1px; height: 30px; background: #555; }
</style>
